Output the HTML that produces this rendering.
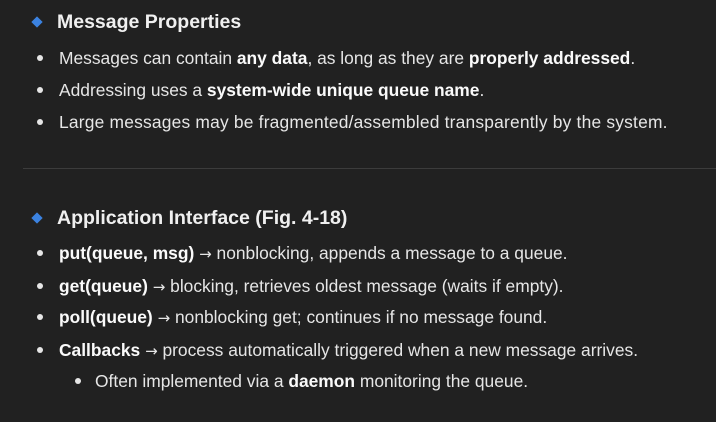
<!DOCTYPE html><html><head><style>
body{margin:0;width:716px;height:422px;background:#212121;color:#e6e6e6;font-family:"Liberation Sans",sans-serif;position:relative;overflow:hidden}
.l{position:absolute;white-space:nowrap;font-size:17.4px;line-height:20px}
.h{position:absolute;white-space:nowrap;font-size:19.5px;font-weight:bold;line-height:24px;color:#f0f0f0}
.d{position:absolute;width:8px;height:8px;background:#3b82e0;transform:rotate(45deg)}
.b{position:absolute;width:6px;height:6px;border-radius:50%;background:#e6e6e6}
b{color:#fafafa}
i{font-style:normal;font-family:"DejaVu Sans",sans-serif;font-size:15px}
hr{position:absolute;left:23px;top:168px;width:693px;margin:0;border:0;border-top:1px solid #3c3c3c}
</style></head><body>
<div class="d" style="left:33px;top:18px"></div><div class="h" style="left:57px;top:10px">Message Properties</div>
<div class="b" style="left:37px;top:55px"></div><div class="l" style="left:59px;top:48px">Messages can contain <b>any data</b>, as long as they are <b>properly addressed</b>.</div>
<div class="b" style="left:37px;top:87px"></div><div class="l" style="left:59px;top:80px">Addressing uses a <b>system-wide unique queue name</b>.</div>
<div class="b" style="left:37px;top:119px"></div><div class="l" style="left:59px;top:112px;letter-spacing:0.2px">Large messages may be fragmented/assembled transparently by the system.</div>
<hr>
<div class="d" style="left:33px;top:214px"></div><div class="h" style="left:57px;top:206px">Application Interface (Fig. 4-18)</div>
<div class="b" style="left:37px;top:250px"></div><div class="l" style="left:59px;top:243px"><b>put(queue, msg)</b> <i>→</i> nonblocking, appends a message to a queue.</div>
<div class="b" style="left:37px;top:283px"></div><div class="l" style="left:59px;top:276px"><b>get(queue)</b> <i>→</i> blocking, retrieves oldest message (waits if empty).</div>
<div class="b" style="left:37px;top:314px"></div><div class="l" style="left:59px;top:307px"><b>poll(queue)</b> <i>→</i> nonblocking get; continues if no message found.</div>
<div class="b" style="left:37px;top:347px"></div><div class="l" style="left:59px;top:340px"><b>Callbacks</b> <i>→</i> process automatically triggered when a new message arrives.</div>
<div class="b" style="left:75px;top:378px"></div><div class="l" style="left:95px;top:371px">Often implemented via a <b>daemon</b> monitoring the queue.</div>
</body></html>
